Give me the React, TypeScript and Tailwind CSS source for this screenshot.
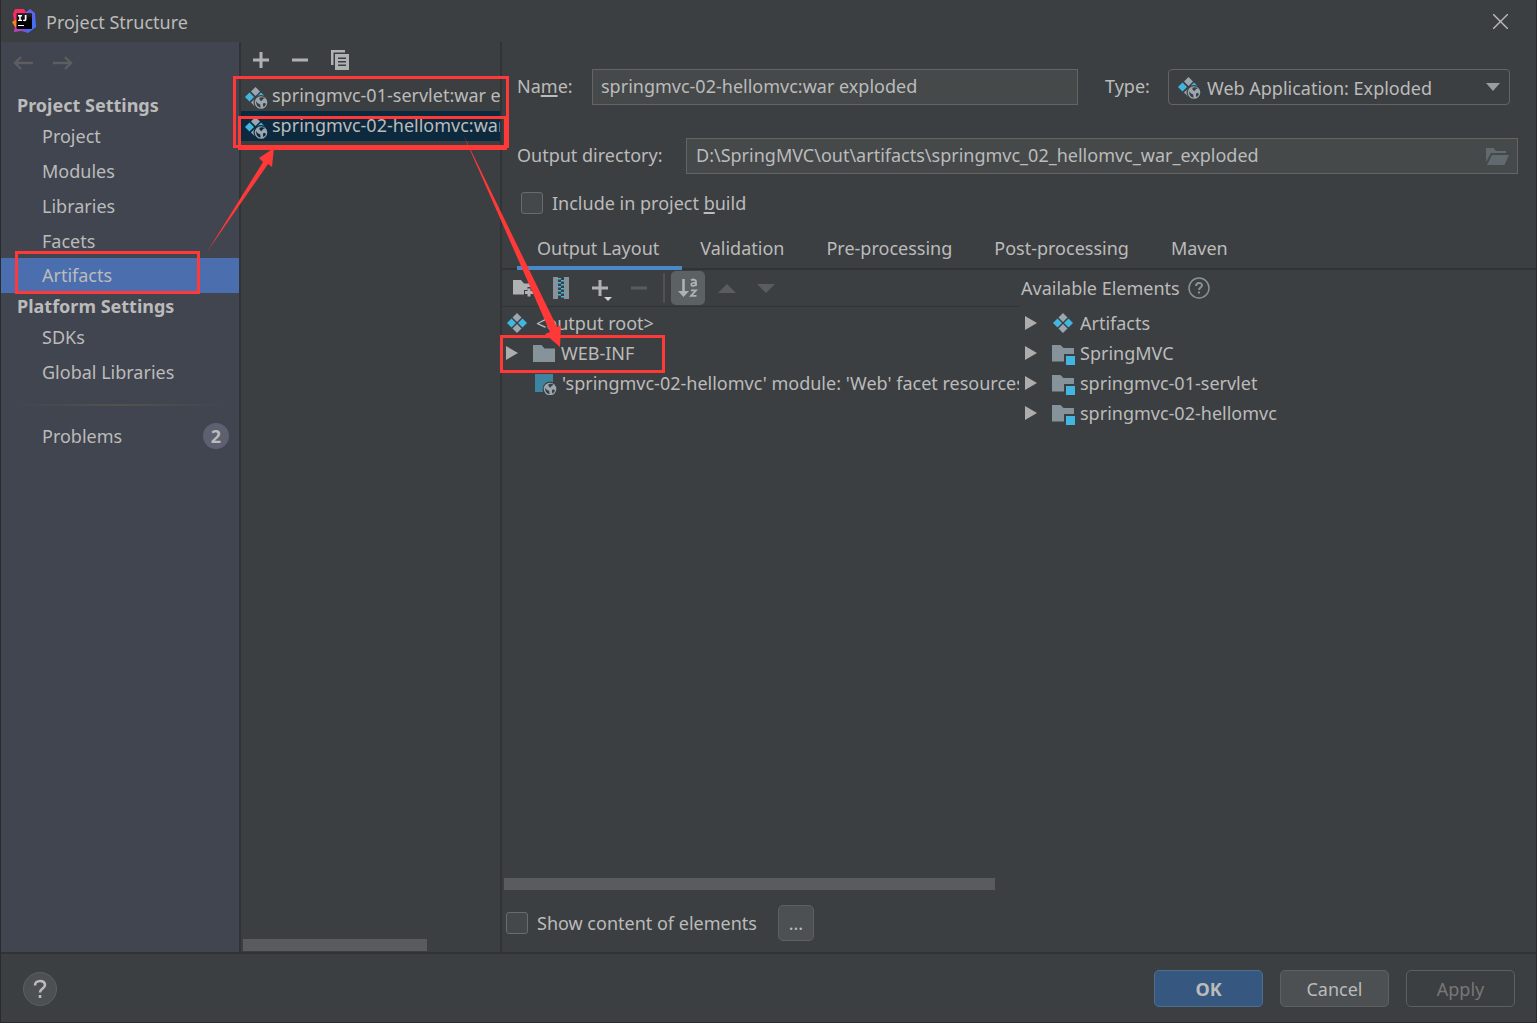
import React from "react";

type IconProps = { className?: string };

function Logo() {
  return (
    <svg width="24" height="24" viewBox="0 0 24 24" aria-hidden="true">
      <defs>
        <linearGradient id="lg-blue" x1="0" y1="0" x2="1" y2="1">
          <stop offset="0" stopColor="#8a5cf0" />
          <stop offset="0.5" stopColor="#5a62f2" />
          <stop offset="1" stopColor="#2f7cf6" />
        </linearGradient>
        <linearGradient id="lg-pink" x1="0" y1="0" x2="1" y2="1">
          <stop offset="0" stopColor="#fe2857" />
          <stop offset="1" stopColor="#f5317f" />
        </linearGradient>
        <linearGradient id="lg-purple" x1="0" y1="0" x2="1" y2="0">
          <stop offset="0" stopColor="#d43bb0" />
          <stop offset="1" stopColor="#5a5bea" />
        </linearGradient>
        <linearGradient id="lg-box" x1="0" y1="0" x2="0" y2="1">
          <stop offset="0" stopColor="#2a2a2e" />
          <stop offset="0.5" stopColor="#000" />
        </linearGradient>
      </defs>
      <path d="M13 4l5-4 5 4 1 14-8 6-8-3z" fill="url(#lg-blue)" />
      <path d="M3 17l13 1-1 5-6-1-7 1z" fill="url(#lg-purple)" />
      <path d="M0 13l5-4v9H3z" fill="#fc801d" />
      <path d="M3 0h9l3 5-9 4-4 3-1-7z" fill="url(#lg-pink)" />
      <rect x="4.500" y="4" width="15.500" height="16" rx="1" fill="url(#lg-box)" />
      <path d="M6 6h4v1.400H8.800v3.400H10v1.300H6v-1.300h1.200V7.400H6zM12.800 6h1.700v4.200c0 1.300-.8 2-2 2-.7 0-1.300-.2-1.700-.7l.9-1c.2.2.4.3.6.3.3 0 .5-.2.500-.7z" fill="#fff" />
      <rect x="6" y="16" width="6" height="1" fill="#fff" />
    </svg>
  );
}

function ArtifactIcon({ className }: IconProps) {
  return (
    <svg className={className} width="20" height="20" viewBox="0 0 20 20" aria-hidden="true">
      <path d="M10 0l4.500 4.500L10 9 5.500 4.500z" fill="#9aa7b0" />
      <path d="M10 11l4.500 4.500L10 20l-4.500-4.500z" fill="#9aa7b0" />
      <path d="M4.500 5.500L9 10l-4.500 4.500L0 10z" fill="#40b6e0" />
      <path d="M15.500 5.500L20 10l-4.500 4.500L11 10z" fill="#40b6e0" />
    </svg>
  );
}

function Globe({ x, y, back }: { x: number; y: number; back: string }) {
  return (
    <g transform={`translate(${x} ${y})`}>
      <circle cx="7" cy="7" r="7.500" fill={back} />
      <circle cx="7" cy="7" r="6.300" fill="#9aa7b0" />
      <path d="M2.200 5.500c1 2.500 2.300 2.400 3.600 3.200.9.600.3 1.700.9 3.300C4 12 1.700 9.500 2.200 5.500zM5.500 2.300c1.500-.9 4-.6 5.300.7-.8.400-1.500.2-2.200 1-.7.700-.2 1.200-1.200 1.400-1.100.1-2.400-1.300-1.900-3.100zM9.500 7.500c1.200-.4 2 .3 2.400.9-.3 1.300-1.300 2.500-2.400 3-.6-1-.9-2.900 0-3.900z" fill={back} />
    </g>
  );
}

function WebArtifactIcon({ className, back = "#3c3f41" }: IconProps & { back?: string }) {
  return (
    <svg className={className} width="23" height="23" viewBox="0 0 23 23" aria-hidden="true">
      <path d="M10.500 0l4.500 4.500L10.500 9 6 4.500z" fill="#9aa7b0" />
      <path d="M10.500 11l4.500 4.500-4.500 4.500L6 15.500z" fill="#9aa7b0" />
      <path d="M4.500 5.500L9 10l-4.500 4.500L0 10z" fill="#40b6e0" />
      <path d="M16 5.500l4.500 4.500-4.500 4.500-4.500-4.500z" fill="#40b6e0" />
      <Globe x={9} y={8.500} back={back} />
    </svg>
  );
}

function FolderIcon() {
  return (
    <svg width="24" height="22" viewBox="0 0 24 22" aria-hidden="true">
      <path d="M1 3h8.500l3 3.500H23V20H1z" fill="#87939a" />
    </svg>
  );
}

function ModuleIcon() {
  return (
    <svg width="24" height="24" viewBox="0 0 24 24" aria-hidden="true">
      <path d="M1 4h8.500l3 3H23v6H13v7.500H1z" fill="#87939a" />
      <rect x="15" y="15" width="9" height="9" fill="#40b6e0" />
    </svg>
  );
}

function FacetIcon() {
  return (
    <svg width="24" height="24" viewBox="0 0 24 24" aria-hidden="true">
      <rect x="1" y="3" width="18" height="18" fill="#3d84a0" />
      <Globe x={9} y={11} back="#3c3f41" />
    </svg>
  );
}

function Expander() {
  return (
    <svg width="12" height="14" viewBox="0 0 12 14" aria-hidden="true">
      <path d="M0 0l12 7-12 7z" fill="#adadad" />
    </svg>
  );
}

function PlusIcon() {
  return (
    <svg width="16" height="16" viewBox="0 0 16 16" aria-hidden="true">
      <path d="M6.500 0h3v6.500H16v3H9.500V16h-3V9.500H0v-3h6.500z" fill="#afb1b3" />
    </svg>
  );
}

function MinusIcon({ color }: { color: string }) {
  return (
    <svg width="16" height="16" viewBox="0 0 16 16" aria-hidden="true">
      <rect x="0" y="6.500" width="16" height="3" fill={color} />
    </svg>
  );
}

function CopyIcon() {
  return (
    <svg width="18" height="20" viewBox="0 0 18 20" aria-hidden="true">
      <path d="M0 0h14v2.500H2.500V15H0z" fill="#afb1b3" />
      <path d="M4 4h14v16H4zM7 7.500V9h8V7.500zM7 11v1.500h8V11zM7 14.500V16h8v-1.500z" fill="#afb1b3" fillRule="evenodd" />
    </svg>
  );
}

function BackArrow({ className }: IconProps) {
  return (
    <svg className={className} width="20" height="14" viewBox="0 0 20 14" fill="none" stroke="#5c5e61" strokeWidth="2.400" aria-hidden="true">
      <path d="M8 1L2 7l6 6M2 7h18" />
    </svg>
  );
}

function NewFolderIcon() {
  return (
    <svg width="22" height="20" viewBox="0 0 22 20" aria-hidden="true">
      <path d="M1 2h8l3 3.500h8V9h-4.500v3H12v4.500H1z" fill="#afb1b3" />
      <path d="M15.500 10.500h3V13H21v3h-2.500v2.500h-3V16H13v-3h2.500z" fill="#afb1b3" />
    </svg>
  );
}

function ArchiveIcon() {
  return (
    <svg width="16" height="22" viewBox="0 0 16 22" aria-hidden="true">
      <path d="M0 0h5v22H0zM11 0h5v22h-5z" fill="#87939a" />
      <path d="M5 1h3v1.500H5zM8 3h3v1.500H8zM5 5h3v1.500H5zM8 7h3v1.500H8zM5 9h3v1.500H5zM8 11h3v1.500H8zM5 13h3v1.500H5zM8 15h3v1.500H8zM5 17h3v1.500H5zM8 19h3v1.500H8z" fill="#40b6e0" />
    </svg>
  );
}

function SortIcon() {
  return (
    <svg width="20" height="20" viewBox="0 0 20 20" aria-hidden="true">
      <path d="M4.200 1h2.600v12H11l-5.500 6L0 13h4.200z" fill="#afb1b3" />
      <path d="M13 2.300c1-.7 2-.9 3-.8M18 8V4c0-1.500-1-2.400-2.500-2.400M18 4.700c-2.500 0-4.700.1-4.700 1.800 0 2 3.500 2 4.700-.3M13 12.300h5l-5 5.500h5.500" fill="none" stroke="#afb1b3" strokeWidth="1.800" />
    </svg>
  );
}

function Triangle({ up, color }: { up?: boolean; color: string }) {
  return (
    <svg width="18" height="9" viewBox="0 0 18 9" aria-hidden="true">
      <path d={up ? "M0 9l9-9 9 9z" : "M0 0h18L9 9z"} fill={color} />
    </svg>
  );
}

function OpenFolderIcon() {
  return (
    <svg width="23" height="17" viewBox="0 0 23 17" aria-hidden="true">
      <path d="M0 0h7.500l2.500 3h10v2H5L0 14z" fill="#616a6f" />
      <path d="M6 7h17l-4.500 10H1z" fill="#616a6f" />
    </svg>
  );
}

function NavItem({ label, selected }: { label: string; selected?: boolean }) {
  return (
    <li>
      <button
        type="button"
        className={
          selected
            ? "flex h-[35px] w-full items-center bg-[#4b6eaf] pb-px pl-[41px] text-left"
            : "flex h-[35px] w-full items-center pl-[41px] text-left"
        }
      >
        {label}
      </button>
    </li>
  );
}

function NavHeading({ children }: { children: React.ReactNode }) {
  return <h2 className="flex h-[26px] items-center pl-4 font-bold">{children}</h2>;
}

function Sidebar() {
  return (
    <nav className="w-[240px] shrink-0 border-r-2 border-[#323334] bg-[#41454f]">
      <div className="flex h-[50px] items-center gap-5 pb-2 pl-3">
        <button type="button" aria-label="Back"><BackArrow /></button>
        <button type="button" aria-label="Forward"><BackArrow className="rotate-180" /></button>
      </div>
      <NavHeading>Project Settings</NavHeading>
      <ul>
        <NavItem label="Project" />
        <NavItem label="Modules" />
        <NavItem label="Libraries" />
        <NavItem label="Facets" />
        <NavItem label="Artifacts" selected />
      </ul>
      <NavHeading>Platform Settings</NavHeading>
      <ul>
        <NavItem label="SDKs" />
        <NavItem label="Global Libraries" />
      </ul>
      <div className="mx-3 mt-[15px] h-0.5 bg-linear-to-r from-transparent via-[#53524f] to-transparent" />
      <button type="button" className="mt-3 flex h-[35px] w-full items-center justify-between pr-2.5 pl-[41px]">
        Problems
        <span className="flex size-[26px] items-center justify-center rounded-full bg-[#5c6070] font-bold">2</span>
      </button>
    </nav>
  );
}

function ArtifactList() {
  return (
    <section aria-label="Artifacts" className="flex w-[261px] shrink-0 flex-col border-r-2 border-[#323334]">
      <div className="flex h-9 items-center gap-[23px] pl-3">
        <button type="button" aria-label="Add"><PlusIcon /></button>
        <button type="button" aria-label="Remove"><MinusIcon color="#afb1b3" /></button>
        <button type="button" aria-label="Copy"><CopyIcon /></button>
      </div>
      <ul className="mt-[3px] overflow-hidden whitespace-nowrap">
        <li className="flex h-[30px] items-center gap-1 pb-0.5 pl-1">
          <WebArtifactIcon className="mt-1.5 shrink-0" />
          springmvc-01-servlet:war exploded
        </li>
        <li className="flex h-[30px] items-center gap-1 bg-[#0d293e] pb-0.5 pl-1">
          <WebArtifactIcon className="mt-1.5 shrink-0" back="#0d293e" />
          springmvc-02-hellomvc:war exploded
        </li>
      </ul>
      <div className="mt-auto mb-px ml-0.5 h-3 w-[71%] bg-[#5a5b5d]" />
    </section>
  );
}

function Settings() {
  return (
    <div className="pt-[27px] pl-[15px]">
      <div className="flex items-center pr-[26px]">
        <label htmlFor="name" className="w-[75px] pb-0.5">
          Na<span className="underline decoration-2 underline-offset-2">m</span>e:
        </label>
        <input
          id="name"
          defaultValue="springmvc-02-hellomvc:war exploded"
          className="h-9 min-w-0 flex-1 border border-[#646464] bg-[#45494a] px-2 pb-0.5"
        />
        <label htmlFor="type" className="ml-[27px] w-[63px] pb-0.5">Type:</label>
        <div className="relative w-[342px]">
          <select id="type" className="h-9 w-full appearance-none rounded-[4px] border border-[#646464] bg-[#3c3f41] pt-0.5 pl-[38px]">
            <option>Web Application: Exploded</option>
          </select>
          <WebArtifactIcon className="pointer-events-none absolute top-2 left-2.5" />
          <svg className="pointer-events-none absolute top-3.5 right-2.5" width="14" height="8" viewBox="0 0 14 8" aria-hidden="true">
            <path d="M0 0h14L7 8z" fill="#9a9da0" />
          </svg>
        </div>
      </div>
      <div className="mt-[33px] flex items-center pr-[18px]">
        <label htmlFor="dir" className="w-[169px] pb-0.5">Output directory:</label>
        <div className="flex h-9 min-w-0 flex-1 items-center border border-[#646464] bg-[#45494a] pr-2">
          <input
            id="dir"
            defaultValue="D:\SpringMVC\out\artifacts\springmvc_02_hellomvc_war_exploded"
            className="min-w-0 flex-1 bg-transparent px-[9px] pb-0.5"
          />
          <button type="button" aria-label="Browse"><OpenFolderIcon /></button>
        </div>
      </div>
      <label className="mt-[15px] ml-1 flex h-7 items-center gap-[9px]">
        <input type="checkbox" className="size-[22px] appearance-none rounded-[3px] border border-[#6b6b6b] bg-[#43494a]" />
        <span>
          Include in project <span className="underline decoration-2 underline-offset-2">b</span>uild
        </span>
      </label>
    </div>
  );
}

function Tabs() {
  const rest = ["Validation", "Pre-processing", "Post-processing", "Maven"];
  return (
    <div role="tablist" className="mt-2.5 flex h-[43px] border-b-2 border-[#323334] pl-[15px]">
      <button type="button" role="tab" aria-selected="true" className="-mb-px h-[43px] border-b-4 border-[#4a88c7] pt-0.5 pr-[23px] pl-5">
        Output Layout
      </button>
      {rest.map((t) => (
        <button key={t} type="button" role="tab" aria-selected="false" className="h-[43px] border-b-4 border-transparent pt-0.5 pr-6 pl-[18px]">
          {t}
        </button>
      ))}
    </div>
  );
}

function OutputTree() {
  return (
    <section aria-label="Output layout" className="flex min-w-0 flex-1 flex-col">
      <div className="flex h-[37px] items-center border-b border-[#323334] pl-2.5">
        <button type="button" aria-label="New folder" className="w-[41px]"><NewFolderIcon /></button>
        <button type="button" aria-label="New archive" className="w-[39px]"><ArchiveIcon /></button>
        <button type="button" aria-label="Add copy" className="relative w-[39px]">
          <PlusIcon />
          <svg className="absolute top-[17px] left-3" width="8" height="4" viewBox="0 0 8 4" aria-hidden="true">
            <path d="M0 0h8L4 4z" fill="#d0d2d4" />
          </svg>
        </button>
        <button type="button" aria-label="Remove" className="w-8"><MinusIcon color="#5a5c5e" /></button>
        <span className="h-[30px] w-0.5 bg-[#515151]" />
        <button type="button" aria-label="Sort" className="ml-1.5 flex h-[34px] w-[34px] items-center justify-center rounded-[5px] bg-[#5c6164]">
          <SortIcon />
        </button>
        <button type="button" aria-label="Move up" className="ml-[13px] w-[39px]"><Triangle up color="#5a5c5e" /></button>
        <button type="button" aria-label="Move down"><Triangle color="#5a5c5e" /></button>
      </div>
      <ul className="mt-px overflow-hidden whitespace-nowrap">
        <li className="flex h-[30px] items-center gap-[9px] pl-[5px]"><ArtifactIcon />&lt;output root&gt;</li>
        <li className="flex h-[30px] items-center pl-1">
          <Expander /><span className="ml-3.5"><FolderIcon /></span><span className="ml-[5px]">WEB-INF</span>
        </li>
        <li className="flex h-[30px] items-center gap-1 pl-8">
          <span className="shrink-0"><FacetIcon /></span>
          'springmvc-02-hellomvc' module: 'Web' facet resources
        </li>
      </ul>
      <div className="mt-auto ml-0.5 h-3 w-[95%] bg-[#5a5b5d]" />
    </section>
  );
}

function AvailableElements() {
  const modules = ["SpringMVC", "springmvc-01-servlet", "springmvc-02-hellomvc"];
  return (
    <section aria-label="Available elements" className="min-w-0 flex-1">
      <div className="flex h-[38px] items-center gap-2 pb-[3px] pl-0.5">
        Available Elements
        <svg width="22" height="22" viewBox="0 0 22 22" fill="none" stroke="#87939a" aria-hidden="true">
          <circle cx="11" cy="11" r="10" strokeWidth="1.500" />
          <path d="M8 9c0-4 6-4 6-.7 0 2.200-3 2.200-3 4.700M11 14.500v2" strokeWidth="2" />
        </svg>
      </div>
      <ul className="whitespace-nowrap">
        <li className="flex h-[30px] items-center pl-1.5"><Expander /><ArtifactIcon className="mr-[7px] ml-4" />Artifacts</li>
        {modules.map((m) => (
          <li key={m} className="flex h-[30px] items-center pl-1.5">
            <Expander /><span className="mr-[5px] ml-3.5"><ModuleIcon /></span>{m}
          </li>
        ))}
      </ul>
    </section>
  );
}

function Annotations() {
  return (
    <svg className="pointer-events-none absolute top-0 -left-px" width="700" height="400" viewBox="0 0 700 400" aria-hidden="true">
      <g fill="none" stroke="#ff3838" strokeWidth="3">
        <rect x="234.500" y="77.500" width="273" height="69" />
        <rect x="239.500" y="117.500" width="266" height="31" />
        <rect x="16.500" y="252.500" width="182" height="40" />
        <rect x="501.500" y="336.500" width="162" height="35" />
      </g>
      <path d="M207 252L263 162l-4-4 15-10-2 19-4-3z" fill="#ff3838" />
      <path d="M463 134L550 332l-5 2 15 13 1-22-4 2z" fill="#ff3838" />
    </svg>
  );
}

export default function App() {
  return (
    <div className="relative flex min-h-screen flex-col border-x border-b border-[#2b2b2b] bg-[#3c3f41] font-['Noto_Sans','Open_Sans',sans-serif] text-[18px] leading-6 text-[#bbbbbb]">
      <header className="flex h-[42px] shrink-0 items-center pr-7 pl-[11px]">
        <Logo />
        <h1 className="ml-2.5 flex-1 pt-0.5">Project Structure</h1>
        <button type="button" aria-label="Close">
          <svg width="15" height="15" viewBox="0 0 15 15" stroke="#bbbbbb" strokeWidth="1.400" aria-hidden="true">
            <path d="M0 0l15 15M15 0L0 15" />
          </svg>
        </button>
      </header>
      <main className="flex flex-1">
        <Sidebar />
        <ArtifactList />
        <div className="flex min-w-0 flex-1 flex-col">
          <Settings />
          <Tabs />
          <div className="flex flex-1">
            <OutputTree />
            <AvailableElements />
          </div>
          <div className="mt-[15px] mb-[11px] flex h-9 items-center pl-1">
            <label className="flex items-center gap-[9px]">
              <input type="checkbox" className="size-[22px] appearance-none rounded-[3px] border border-[#6b6b6b] bg-[#43494a]" />
              Show content of elements
            </label>
            <button type="button" className="ml-[21px] h-9 w-9 rounded-[5px] border border-[#5e6060] bg-[#4c5052]">...</button>
          </div>
        </div>
      </main>
      <footer className="flex h-[70px] shrink-0 items-center gap-[17px] border-t-2 border-[#323334] pt-px pr-[21px] pl-[22px]">
        <button type="button" aria-label="Help" className="mr-auto flex size-[34px] items-center justify-center rounded-full border border-[#5e6060] bg-[#4c5052]">
          <svg width="14" height="20" viewBox="0 0 14 20" fill="none" stroke="#bbbbbb" strokeWidth="2.600" aria-hidden="true">
            <path d="M2 6.500C2 .500 12 .500 12 6c0 3.500-5 3.500-5 7.500M7 16v3" />
          </svg>
        </button>
        <button type="button" className="h-[37px] w-[109px] rounded-[5px] border border-[#4c708c] bg-[#365880] font-bold">OK</button>
        <button type="button" className="h-[37px] w-[109px] rounded-[5px] border border-[#5e6060] bg-[#4c5052]">Cancel</button>
        <button type="button" disabled className="h-[37px] w-[109px] rounded-[5px] border border-[#5e6060] text-[#777777]">Apply</button>
      </footer>
      <Annotations />
    </div>
  );
}
